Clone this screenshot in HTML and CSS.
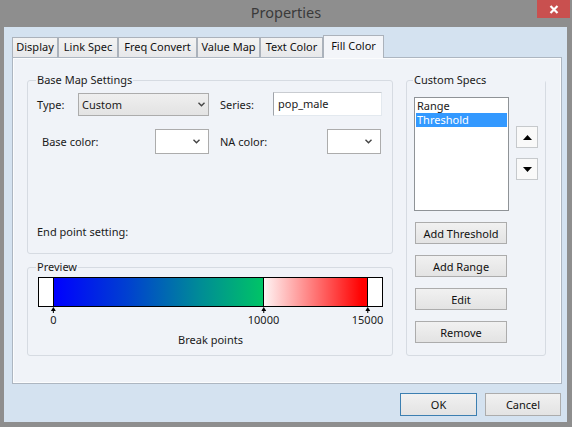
FILE: index.html
```html
<!DOCTYPE html>
<html>
<head>
<meta charset="utf-8">
<link rel="stylesheet" href="styles.css">
</head>
<body>
<div class="window">
  <div class="titlebar">
    <span class="title">Properties</span>
    <div class="close">
      <svg width="10" height="9" viewBox="0 0 10 9"><path d="M1.5 1 L8.5 8 M8.5 1 L1.5 8" stroke="#fff" stroke-width="2.2" fill="none"/></svg>
    </div>
  </div>
  <div class="client">
    <div class="tabs">
      <div class="tab w1">Display</div>
      <div class="tab w2">Link Spec</div>
      <div class="tab w3">Freq Convert</div>
      <div class="tab w4">Value Map</div>
      <div class="tab w5">Text Color</div>
      <div class="tab active">Fill Color</div>
    </div>
    <div class="panel">
      <div class="leftcol">
        <div class="group basemap">
          <div class="legend">Base Map Settings</div>
          <div class="row row1">
            <span class="lbl-type">Type:</span>
            <div class="select gray"><span>Custom</span><svg class="chev" width="7" height="5" viewBox="0 0 7 5"><path d="M0.5 0.8 L3.5 3.8 L6.5 0.8" stroke="#444" stroke-width="1.4" fill="none"/></svg></div>
            <span class="lbl-series">Series:</span>
            <div class="input">pop_male</div>
          </div>
          <div class="row row2">
            <span class="lbl-base">Base color:</span>
            <div class="select white"><span></span><svg class="chev" width="7" height="5" viewBox="0 0 7 5"><path d="M0.5 0.8 L3.5 3.8 L6.5 0.8" stroke="#444" stroke-width="1.4" fill="none"/></svg></div>
            <span class="lbl-na">NA color:</span>
            <div class="select white"><span></span><svg class="chev" width="7" height="5" viewBox="0 0 7 5"><path d="M0.5 0.8 L3.5 3.8 L6.5 0.8" stroke="#444" stroke-width="1.4" fill="none"/></svg></div>
          </div>
          <div class="endpoint">End point setting:</div>
        </div>
        <div class="group preview">
          <div class="legend">Preview</div>
          <div class="bar">
            <div class="seg seg-end"></div>
            <div class="seg seg-blue"></div>
            <div class="seg seg-red"></div>
            <div class="seg seg-end div"></div>
          </div>
          <div class="axis">
            <div class="tick" style="left:15.5px"><svg width="5" height="6" viewBox="0 0 5 6"><path d="M2.5 0 L5 4 L0 4 Z" fill="#000"/><rect x="2" y="4" width="1" height="2" fill="#000"/></svg><span>0</span></div>
            <div class="tick" style="left:225.5px"><svg width="5" height="6" viewBox="0 0 5 6"><path d="M2.5 0 L5 4 L0 4 Z" fill="#000"/><rect x="2" y="4" width="1" height="2" fill="#000"/></svg><span>10000</span></div>
            <div class="tick" style="left:329.5px"><svg width="5" height="6" viewBox="0 0 5 6"><path d="M2.5 0 L5 4 L0 4 Z" fill="#000"/><rect x="2" y="4" width="1" height="2" fill="#000"/></svg><span>15000</span></div>
          </div>
          <div class="caption">Break points</div>
        </div>
      </div>
      <div class="group specs">
        <div class="legend">Custom Specs</div>
        <div class="spec-top">
          <div class="listbox">
            <div class="item">Range</div>
            <div class="item sel">Threshold</div>
          </div>
          <div class="arrows">
            <div class="arrow-btn"><svg width="9" height="5" viewBox="0 0 9 5"><path d="M4.5 0 L9 5 L0 5 Z" fill="#000"/></svg></div>
            <div class="arrow-btn"><svg width="9" height="5" viewBox="0 0 9 5"><path d="M0 0 L9 0 L4.5 5 Z" fill="#000"/></svg></div>
          </div>
        </div>
        <div class="spec-buttons">
          <button class="btn">Add Threshold</button>
          <button class="btn">Add Range</button>
          <button class="btn">Edit</button>
          <button class="btn">Remove</button>
        </div>
      </div>
    </div>
    <div class="footer">
      <button class="btn ok">OK</button>
      <button class="btn cancel">Cancel</button>
    </div>
  </div>
</div>
</body>
</html>
```

FILE: styles.css
```css
* { box-sizing: border-box; }
html, body { margin: 0; padding: 0; }
body {
  width: 572px;
  height: 427px;
  overflow: hidden;
  font-family: "Noto Sans", "Open Sans", sans-serif;
  font-size: 11px;
  color: #000;
  background: #8e8e8e;
}
.window {
  width: 572px;
  height: 427px;
  background: #8e8e8e;
  display: flex;
  flex-direction: column;
}
.titlebar {
  height: 27px;
  flex: none;
  display: grid;
  grid-template-columns: 1fr auto 1fr;
  align-items: start;
}
.title {
  grid-column: 2;
  font-size: 14.5px;
  line-height: 24px;
  color: #3a3a3a;
}
.close {
  grid-column: 3;
  justify-self: end;
  width: 33px;
  height: 18px;
  margin-right: 2px;
  background: #c9504f;
  display: flex;
  align-items: center;
  justify-content: center;
}
.client {
  flex: 1;
  margin: 0 5px 5px 4px;
  background: #d4e2f0;
  padding: 8px 5px 0 8px;
}
.tabs {
  display: flex;
  align-items: flex-end;
  height: 22px;
}
.tab {
  height: 20px;
  border: 1px solid #abb2bb;
  border-bottom: 0;
  background: linear-gradient(#f3f3f3, #e7e8ea);
  text-align: center;
  line-height: 18px;
  white-space: nowrap;
  color: #111;
}
.w1 { width: 46px; }
.w2 { width: 60px; }
.w3 { width: 79px; }
.w4 { width: 63px; }
.w5 { width: 63px; }
.tab.active {
  width: 61px;
  height: 23px;
  margin-bottom: -1px;
  background: #f3f5f9;
  position: relative;
  z-index: 1;
  line-height: 20px;
}
.panel {
  width: 550px;
  height: 327px;
  border: 1px solid #adb6c1;
  background: #f0f3f8;
  box-shadow: inset 0 0 0 1px #fbfcfd;
  display: flex;
  align-items: flex-start;
  gap: 13px;
  padding: 22px 15px 0 14px;
}
.leftcol {
  width: 366px;
  display: flex;
  flex-direction: column;
  gap: 13px;
}
.group {
  border: 1px solid #d6dbe2;
  border-radius: 3px;
  color: #1a1a1a;
}
.legend {
  display: table;
  margin: -9px 0 0 8px;
  padding: 0 1px;
  line-height: 16px;
  background: #f0f3f8;
}
.basemap { height: 174px; }
.row { display: flex; align-items: center; }
.row1 { margin-top: 4px; height: 24px; padding-left: 9px; }
.row2 { margin-top: 12px; height: 26px; padding-left: 14px; }
.lbl-type { width: 41px; }
.lbl-series { margin-left: 11px; width: 53px; }
.lbl-base { width: 113px; }
.lbl-na { margin-left: 11px; width: 107px; }
.select {
  border: 1px solid #acacac;
  display: flex;
  align-items: center;
  justify-content: space-between;
}
.select.gray {
  width: 131px;
  height: 23px;
  padding: 0 3px 0 3px;
  background: linear-gradient(#efefef, #e3e3e3);
}
.select.white {
  width: 54px;
  height: 25px;
  padding: 0 8px 0 3px;
  background: #fff;
}
.input {
  width: 109px;
  height: 24px;
  background: #fff;
  border: 1px solid #e3e9ef;
  border-top-color: #c9ccd1;
  border-left-color: #9fa3a9;
  padding-left: 4px;
  line-height: 21px;
}
.endpoint {
  margin-top: 70px;
  padding-left: 9px;
  line-height: 16px;
}
.preview { height: 89px; }
.bar {
  margin: 2px 0 0 10px;
  width: 345px;
  height: 30px;
  border: 1px solid #000;
  display: flex;
}
.seg { height: 100%; }
.seg-end { width: 14px; background: #fff; }
.seg-end.div { border-left: 1px solid #000; width: 15px; }
.seg-blue {
  width: 210px;
  border-left: 1px solid #000;
  background: linear-gradient(to right, #0000ff, #0040d0 35%, #008c96 70%, #00c466);
}
.seg-red {
  width: 104px;
  border-left: 1px solid #000;
  background: linear-gradient(to right, #fff4f4, #ff5a5a 60%, #ff0000 95%);
}
.axis {
  position: relative;
  margin-left: 10px;
  width: 345px;
  height: 20px;
}
.tick {
  position: absolute;
  top: 0;
  transform: translateX(-50%);
  display: flex;
  flex-direction: column;
  align-items: center;
}
.tick svg { display: block; }
.tick span { line-height: 14px; }
.caption {
  margin: 5px 0 0 10px;
  width: 345px;
  text-align: center;
  line-height: 16px;
}
.specs {
  width: 140px;
  height: 276px;
  display: flex;
  flex-direction: column;
}
.specs .legend { margin-left: 6px; }
.spec-top { display: flex; margin: 9px 0 0 7px; }
.listbox {
  width: 95px;
  height: 114px;
  border: 1px solid #8f9397;
  background: #fff;
  padding: 1px 1px;
}
.item { line-height: 14px; height: 14px; padding-left: 1px; }
.item.sel { background: #3399ff; color: #fff; }
.arrows {
  display: flex;
  flex-direction: column;
  gap: 10px;
  margin: 29px 0 0 7px;
}
.arrow-btn {
  width: 22px;
  height: 22px;
  border: 1px solid #c6c9cc;
  background: #f9f9f9;
  display: flex;
  align-items: center;
  justify-content: center;
}
.spec-buttons {
  display: flex;
  flex-direction: column;
  gap: 11px;
  margin: 11px 0 0 8px;
}
.btn {
  width: 92px;
  height: 22px;
  border: 1px solid #acacac;
  background: linear-gradient(#f1f1f1, #e3e3e3);
  font: inherit;
  color: #111;
  padding: 0;
  margin: 0;
}
.footer {
  display: flex;
  justify-content: flex-end;
  gap: 8px;
  margin-top: 9px;
  padding-right: 1px;
}
.btn.ok { width: 77px; height: 23px; border-color: #3c7fb1; }
.btn.cancel { width: 76px; height: 23px; }
```
